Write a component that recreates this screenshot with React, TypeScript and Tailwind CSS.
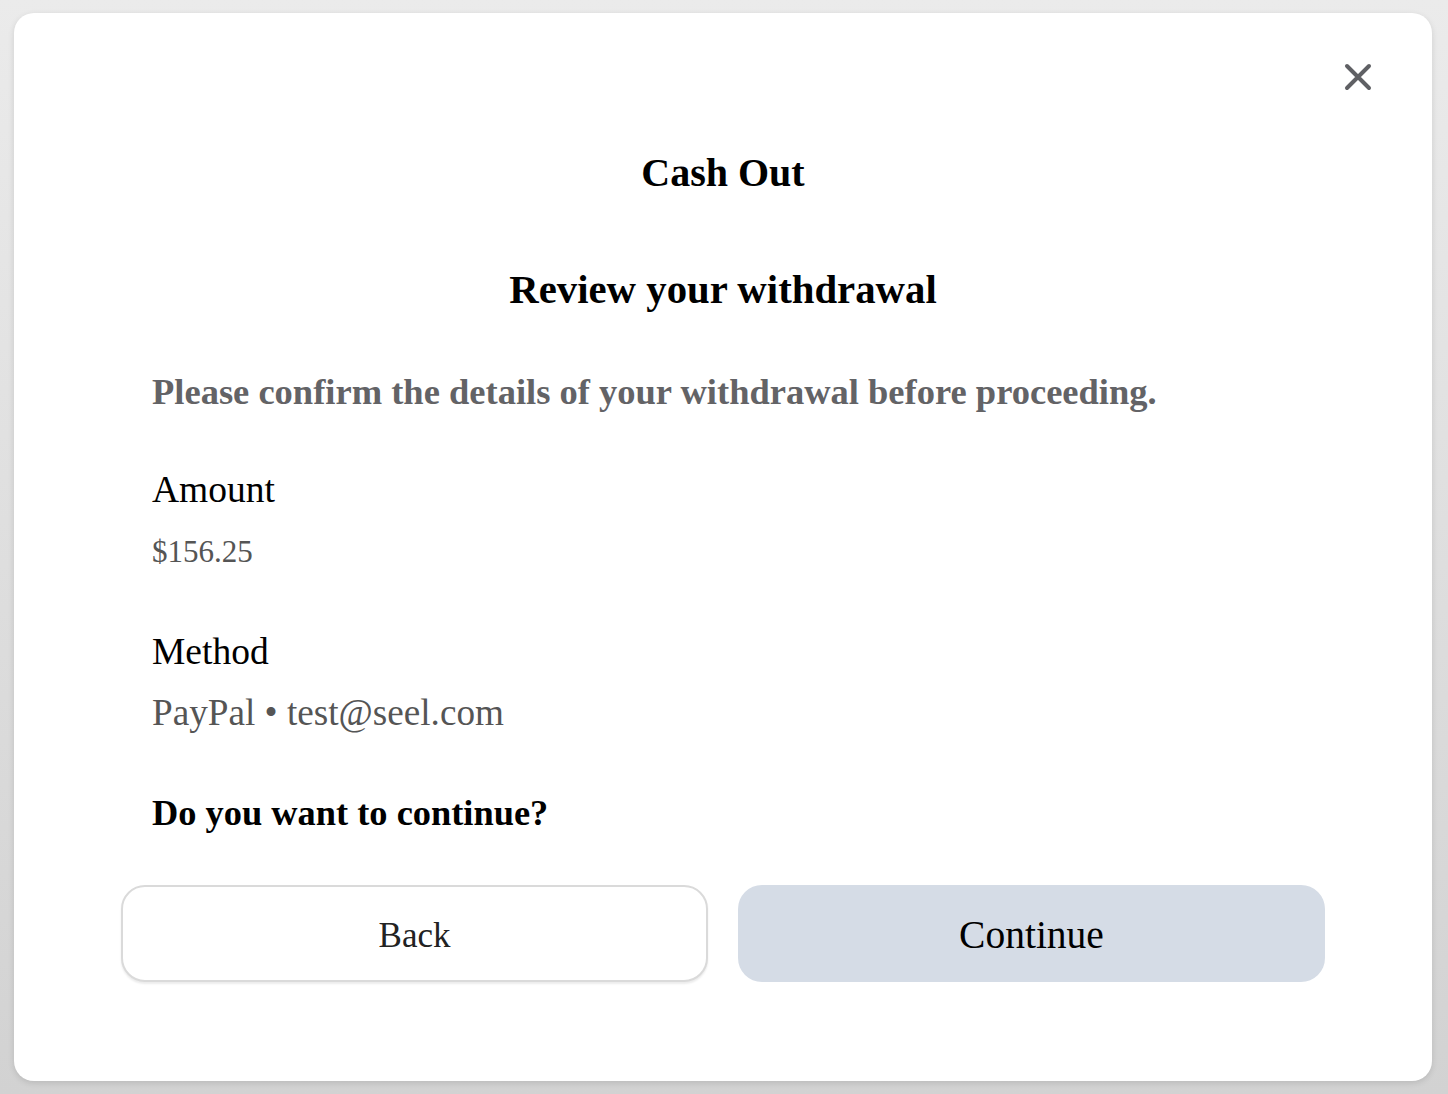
const serif = { fontFamily: '"Liberation Serif", "DejaVu Serif", serif' };

function CloseIcon() {
  return (
    <svg width="30" height="30" viewBox="0 0 30 30" fill="none">
      <path d="M4 4 26 26M26 4 4 26" stroke="#5f6064" strokeWidth="4" strokeLinecap="round" />
    </svg>
  );
}

export default function App() {
  return (
    <div
      className="min-h-[1094px] w-full bg-gradient-to-b from-[#ebebeb] to-[#d2d2d2] pt-[13px] pl-[14px] pr-[16px]"
      style={serif}
    >
      <div className="relative h-[1068px] rounded-[20px] bg-white shadow-[0_2px_6px_rgba(0,0,0,0.12)]">
        <button className="absolute right-[59px] top-[49px] p-0" aria-label="Close">
          <CloseIcon />
        </button>

        <div className="flex flex-col pt-[136px]">
          <h1 className="text-center text-[40px] font-bold leading-[48px] text-black">Cash Out</h1>
          <h2 className="mt-[69px] text-center text-[40.8px] font-bold leading-[48px] text-black">
            Review your withdrawal
          </h2>

          <div className="px-[138px]">
            <p className="mt-[56px] text-[36.5px] font-bold leading-[44px] text-[#636366]">
              Please confirm the details of your withdrawal before proceeding.
            </p>

            <div className="mt-[54px] text-[37.5px] leading-[44px] text-black">Amount</div>
            <div className="mt-[18px] text-[31px] leading-[44px] text-[#555]">$156.25</div>

            <div className="mt-[56px] text-[37.5px] leading-[44px] text-black">Method</div>
            <div className="mt-[17px] text-[37.2px] leading-[44px] text-[#555]">PayPal • test@seel.com</div>

            <div className="mt-[56px] text-[36.4px] font-bold leading-[44px] text-black">
              Do you want to continue?
            </div>
          </div>

          <div className="mt-[50px] grid grid-cols-2 gap-[30px] px-[107px]">
            <button className="h-[97px] rounded-[24px] border-2 border-[#dadada] bg-white pt-[6px] text-[35px] text-[#222] shadow-[0_2px_2px_rgba(0,0,0,0.08)]">
              Back
            </button>
            <button className="h-[97px] rounded-[24px] bg-[#d5dce6] pt-[4px] text-[39.5px] text-black">
              Continue
            </button>
          </div>
        </div>
      </div>
    </div>
  );
}
